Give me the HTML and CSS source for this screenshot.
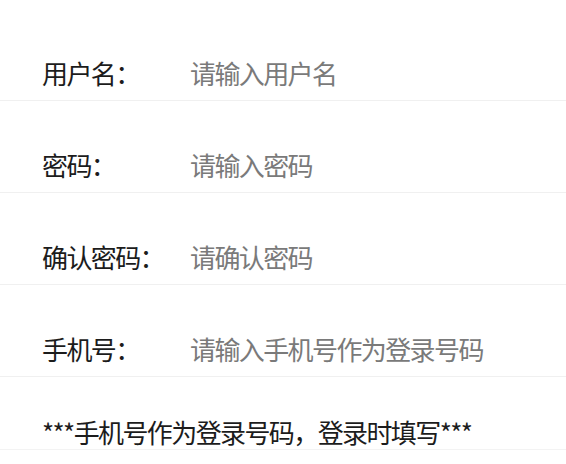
FILE: index.html
```html
<!DOCTYPE html>
<html lang="zh-CN">
<head>
<meta charset="utf-8">
<link rel="stylesheet" href="styles.css">
</head>
<body>
<form class="form">
  <div class="row">
    <label class="label">用户名：</label>
    <input class="field" type="text" placeholder="请输入用户名">
  </div>
  <div class="row">
    <label class="label">密码：</label>
    <input class="field" type="password" placeholder="请输入密码">
  </div>
  <div class="row">
    <label class="label">确认密码：</label>
    <input class="field" type="password" placeholder="请确认密码">
  </div>
  <div class="row">
    <label class="label">手机号：</label>
    <input class="field" type="text" placeholder="请输入手机号作为登录号码">
  </div>
  <div class="note">***手机号作为登录号码，登录时填写***</div>
</form>
</body>
</html>
```
FILE: styles.css
```css
html, body {
  margin: 0;
  padding: 0;
  background: #ffffff;
}
body {
  font-family: "Noto Sans CJK SC", "Noto Sans", sans-serif;
  width: 566px;
  height: 464px;
  overflow: hidden;
}
.form {
  padding-top: 9px;
  display: flex;
  flex-direction: column;
}
.row {
  height: 92px;
  box-sizing: border-box;
  display: flex;
  align-items: flex-end;
  padding: 0 0 12px 42px;
  border-bottom: 1px solid #f0f0f0;
}
.label {
  width: 148px;
  flex: none;
  font-size: 26px;
  letter-spacing: -1.6px;
  line-height: 30px;
  color: #1c1c1c;
}
.field {
  flex: 1;
  border: none;
  outline: none;
  padding: 0;
  margin: 0;
  background: transparent;
  font-family: inherit;
  font-size: 26px;
  letter-spacing: -1.6px;
  line-height: 30px;
  height: 30px;
  color: #333;
}
.field::placeholder {
  color: #7a7a7a;
}
.note {
  height: 73px;
  box-sizing: border-box;
  display: flex;
  align-items: flex-end;
  padding: 0 0 2px 42px;
  font-size: 26px;
  letter-spacing: -1.6px;
  line-height: 30px;
  color: #1c1c1c;
  border-bottom: 1px solid #f3f3f3;
}
```
